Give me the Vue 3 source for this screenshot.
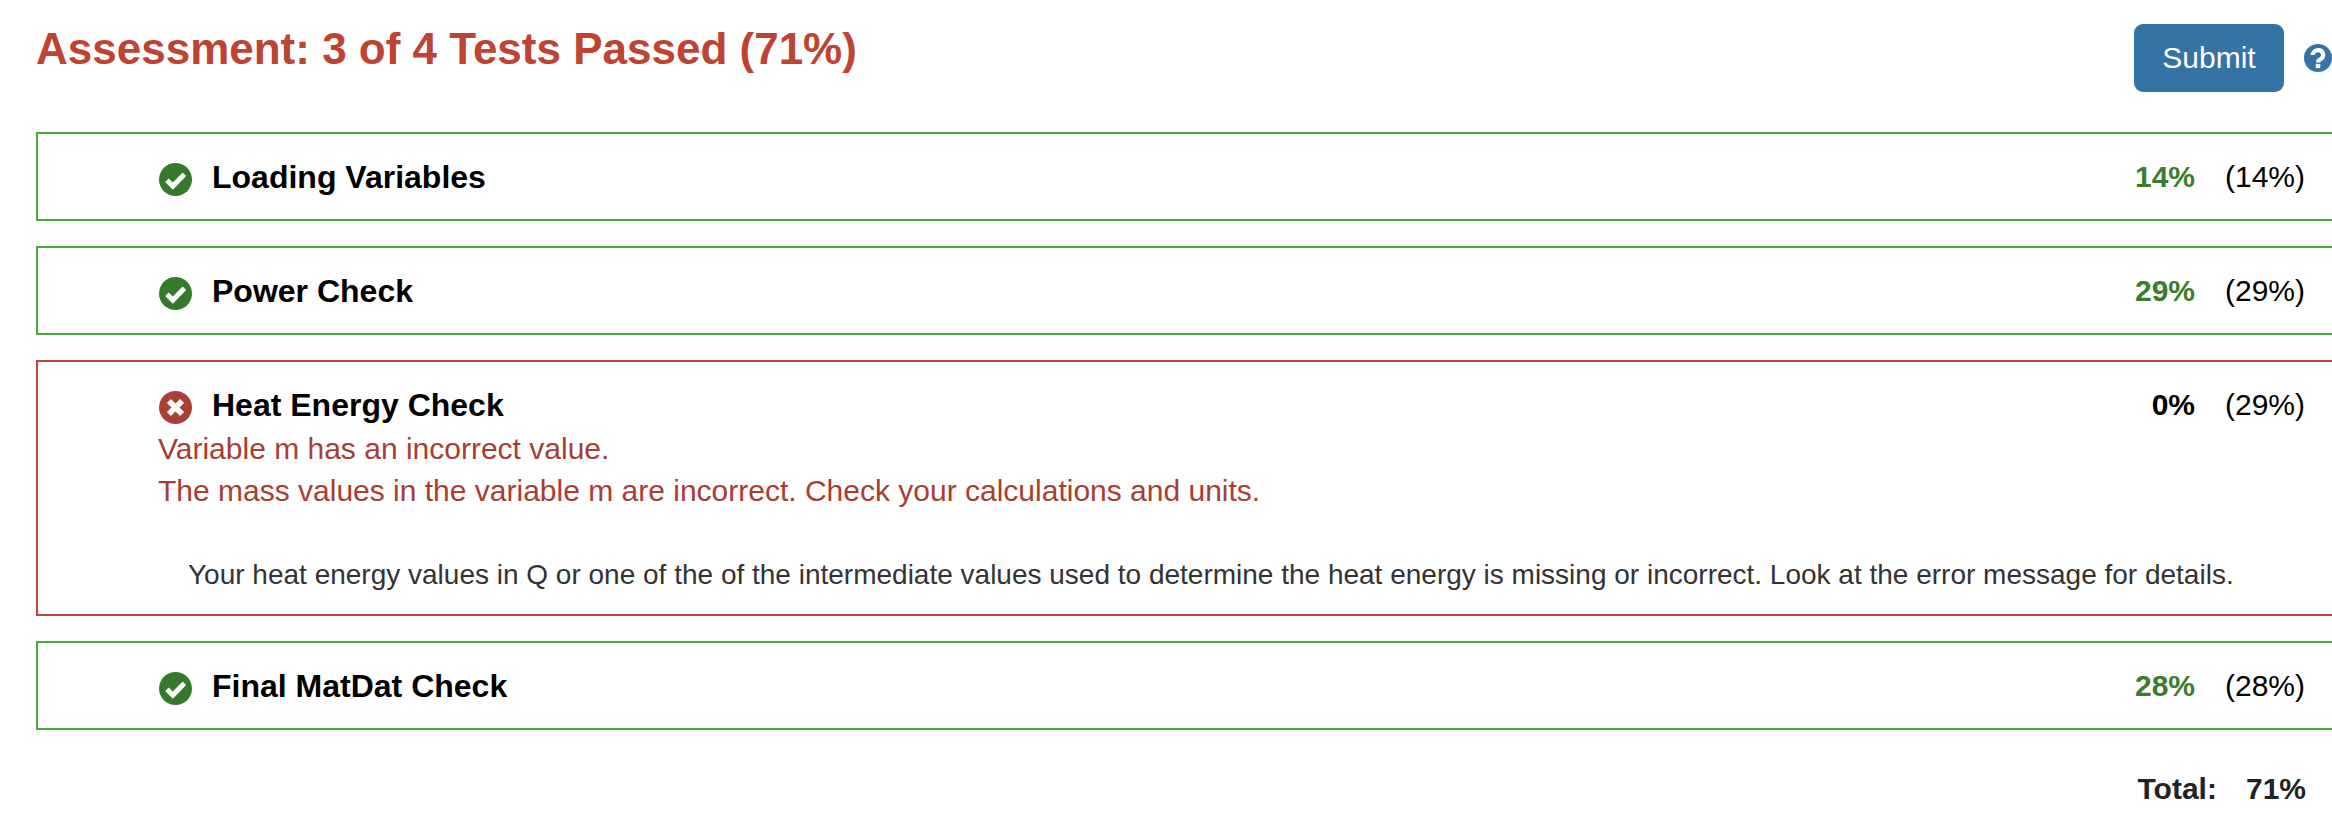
<script setup>
const tests = [
  { name: 'Loading Variables', score: '14%', max: '(14%)', ok: true },
  { name: 'Power Check', score: '29%', max: '(29%)', ok: true },
  {
    name: 'Heat Energy Check', score: '0%', max: '(29%)', ok: false,
    errors: ['Variable m has an incorrect value.', 'The mass values in the variable m are incorrect. Check your calculations and units.'],
    hint: 'Your heat energy values in Q or one of the of the intermediate values used to determine the heat energy is missing or incorrect. Look at the error message for details.'
  },
  { name: 'Final MatDat Check', score: '28%', max: '(28%)', ok: true }
]
</script>

<template>
  <div class="page">
    <header class="top">
      <h1 class="title">Assessment: 3 of 4 Tests Passed (71%)</h1>
      <div class="actions">
        <button class="submit" type="button">Submit</button>
        <svg class="help" viewBox="0 0 100 100" aria-hidden="true">
          <circle cx="50" cy="50" r="50" fill="#3573a5" />
          <path d="M31 39a19 17 0 1 1 28 15c-6 4-9 6-9 12" fill="none" stroke="#fff" stroke-width="15" />
          <rect x="42" y="71" width="16" height="15" fill="#fff" />
        </svg>
      </div>
    </header>

    <section v-for="t in tests" :key="t.name" class="box" :class="t.ok ? 'pass' : 'fail'">
      <div class="head">
        <svg class="state" viewBox="0 0 100 100" aria-hidden="true">
          <circle cx="50" cy="50" r="50" :fill="t.ok ? '#35792a' : '#a94036'" />
          <path v-if="t.ok" d="M24 52l18 18 35-36" fill="none" stroke="#fff" stroke-width="15" />
          <path v-else d="M30 30l40 40M70 30l-40 40" fill="none" stroke="#fff" stroke-width="17" />
        </svg>
        <span class="name">{{ t.name }}</span>
        <span class="score">{{ t.score }}</span>
        <span class="max">{{ t.max }}</span>
      </div>
      <template v-if="!t.ok">
        <p v-for="e in t.errors" :key="e" class="error">{{ e }}</p>
        <p class="hint">{{ t.hint }}</p>
      </template>
    </section>

    <footer class="total">
      <span>Total:</span>
      <span>71%</span>
    </footer>
  </div>
</template>

<style scoped>
.page {
  box-sizing: border-box;
  width: 2332px;
  height: 838px;
  overflow: hidden;
  padding: 24px 0 0 36px;
  font-family: "Liberation Sans", Arial, sans-serif;
  font-size: 30px;
  line-height: 42px;
  color: #000;
  background: #fff;
}
.top {
  display: flex;
  justify-content: space-between;
  align-items: flex-start;
  height: 68px;
  margin-bottom: 40px;
}
.title {
  margin: 0;
  font-size: 44px;
  line-height: 50px;
  font-weight: 700;
  color: #bd4333;
}
.actions {
  display: flex;
  align-items: center;
  gap: 20px;
}
.submit {
  width: 150px;
  height: 68px;
  padding: 0;
  border: 0;
  border-radius: 9px;
  background: #3573a5;
  color: #fff;
  font: inherit;
}
.help {
  width: 28px;
  height: 28px;
}
.box {
  box-sizing: border-box;
  margin: 0 -60px 25px 0;
  padding: 22px 85px 21px 120px;
  border: 2px solid;
}
.pass { border-color: #4fa73f; }
.fail { border-color: #bf4436; }
.head {
  display: flex;
  align-items: center;
}
.state {
  width: 33px;
  height: 33px;
  flex: none;
  margin: 4px 20px 0 1px;
}
.name {
  flex: 1;
  font-size: 32px;
  font-weight: 700;
}
.score {
  font-weight: 700;
  color: #3a7d2c;
}
.fail .score { color: #000; }
.max {
  width: 80px;
  margin-left: 30px;
  text-align: right;
}
.error {
  margin: 0;
  color: #a83d34;
}
.head + .error {
  margin-top: 2px;
}
.hint {
  margin: 42px 0 -3px 30px;
  font-size: 28px;
  color: #333;
}
.total {
  display: flex;
  justify-content: flex-end;
  gap: 29px;
  margin-top: 38px;
  padding-right: 26px;
  font-weight: 700;
  color: #222;
}
</style>
